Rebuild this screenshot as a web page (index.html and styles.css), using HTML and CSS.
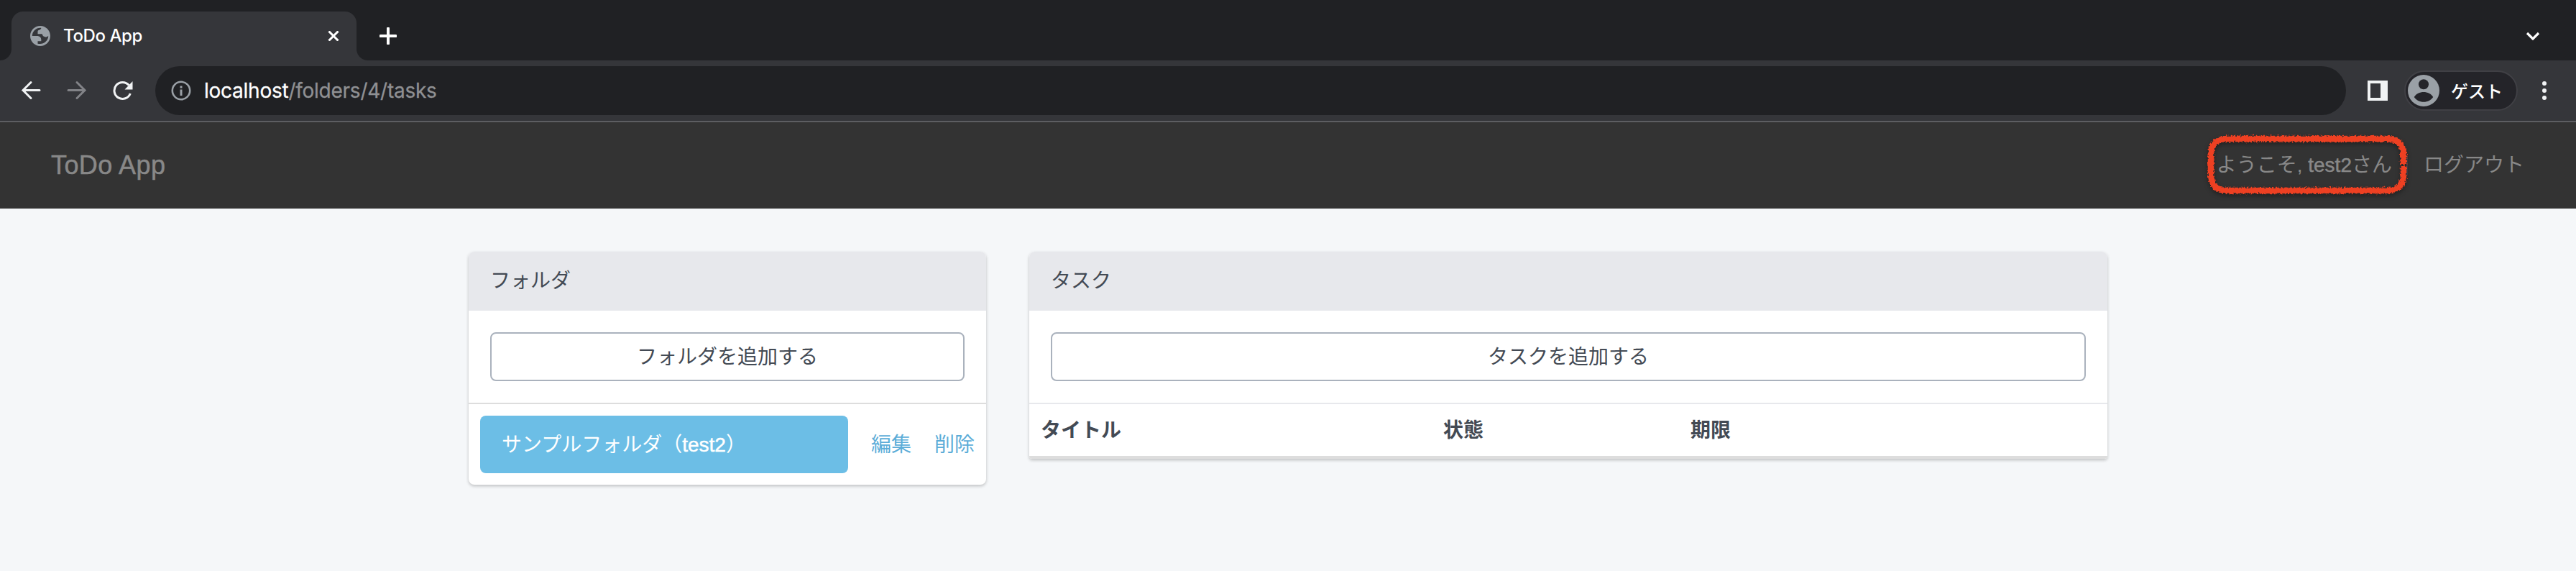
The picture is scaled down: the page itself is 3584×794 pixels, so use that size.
FILE: index.html
```html
<!DOCTYPE html>
<html lang="ja">
<head>
<meta charset="utf-8">
<title>ToDo App</title>
<link rel="stylesheet" href="styles.css">
</head>
<body>
<div class="tabstrip">
  <span class="foot foot-left"></span>
  <div class="tab">
    <svg class="favicon" viewBox="2 2 20 20"><path fill="#9aa0a6" fill-rule="evenodd" d="M12 2C6.480 2 2 6.480 2 12s4.480 10 10 10 10-4.480 10-10S17.520 2 12 2zM4 12h4.400c3.407.020 4.922 1.730 4.540 5.130H9.490v2.470C14.700 21 20 17.200 20 12c-.830.670-1.500 1-2 1-2 0-4-1-4-3H9.500V7.500C9.500 5.500 12.500 6.500 13 4.060 8.200 3.500 4 7.200 4 12z"/></svg>
    <span class="tab-title">ToDo App</span>
    <svg class="tab-close" viewBox="0 0 16 14"><path d="M1.500 .500l13 13M14.500 .500l-13 13" stroke="#fff" stroke-width="3"/></svg>
  </div>
  <span class="foot foot-right"></span>
  <svg class="new-tab" viewBox="0 0 24 24"><path d="M12 1.500v21M1.500 12h21" stroke="#fff" stroke-width="4" stroke-linecap="round"/></svg>
  <svg class="tab-search" viewBox="0 0 20 12"><path d="M2 2l8 8 8-8" fill="none" stroke="#fff" stroke-width="3.200"/></svg>
</div>
<div class="toolbar">
  <svg class="nav-icon" viewBox="0 0 28 28"><path d="M26 13.500H3M14 2.500L3 13.500l11 11" fill="none" stroke="#f1f3f4" stroke-width="3" stroke-linecap="round"/></svg>
  <svg class="nav-icon" viewBox="0 0 28 28"><path d="M2 13.500h23M14 2.500l11 11-11 11" fill="none" stroke="#828387" stroke-width="3" stroke-linecap="round"/></svg>
  <svg class="nav-icon" viewBox="0 0 28 28"><path d="M24.300 18A11.500 11.500 0 1 1 22.300 6.500" fill="none" stroke="#f1f3f4" stroke-width="3"/><path d="M27.500 1v11.500H16.500z" fill="#f1f3f4"/></svg>
  <div class="omnibox">
    <svg class="info" viewBox="0 0 28 28"><circle cx="14" cy="14" r="12.200" fill="none" stroke="#9aa0a6" stroke-width="2.600"/><path d="M12.500 7.500h3v3h-3zM12.500 12.500h3v8.500h-3z" fill="#9aa0a6"/></svg>
    <span class="url"><span class="host">localhost</span>/folders/4/tasks</span>
  </div>
  <svg class="side-panel" viewBox="0 0 28 28"><path fill="#f1f3f4" fill-rule="evenodd" d="M0 0h28v28H0zM4 4v20h14V4z"/></svg>
  <div class="profile">
    <svg class="avatar" viewBox="0 0 44 44"><circle cx="22" cy="22" r="22" fill="#9aa0a6"/><circle cx="22" cy="13.300" r="7" fill="#242429"/><path d="M8.800 31C11 26.500 17 24 22 24s11 2.500 13.200 7C32.500 35 27.500 37.800 22 37.800S11.500 35 8.800 31z" fill="#242429"/></svg>
    <span>ゲスト</span>
  </div>
  <svg class="menu" viewBox="0 0 6 28"><circle cx="3" cy="4" r="3" fill="#f1f3f4"/><circle cx="3" cy="14" r="3" fill="#f1f3f4"/><circle cx="3" cy="24" r="3" fill="#f1f3f4"/></svg>
</div>
<nav class="navbar">
  <a class="brand">ToDo App</a>
  <div class="account">
    <span class="welcome">ようこそ, <span class="latin">test2</span>さん
      <svg class="marker" viewBox="0 0 292 96">
        <defs><filter id="rough" x="-5%" y="-10%" width="110%" height="120%"><feTurbulence type="fractalNoise" baseFrequency="0.4" numOctaves="2" seed="4" result="n"/><feDisplacementMap in="SourceGraphic" in2="n" scale="6" xChannelSelector="R" yChannelSelector="G"/></filter></defs>
        <path d="M280 50V61Q280 84 257 84H35Q12 84 12 61V35Q12 12 35 12H257Q280 12 280 35V48" fill="none" stroke="#ee4023" stroke-width="8.500" filter="url(#rough)"/>
      </svg>
    </span>
    <span class="separator"></span>
    <a class="logout">ログアウト</a>
  </div>
</nav>
<main class="container">
  <section class="panel folders">
    <h2 class="panel-heading">フォルダ</h2>
    <div class="panel-body"><a class="btn">フォルダを追加する</a></div>
    <div class="folder-row">
      <a class="folder">サンプルフォルダ（<span class="latin">test2</span>）</a>
      <a class="link">編集</a>
      <a class="link">削除</a>
    </div>
  </section>
  <section class="panel tasks">
    <h2 class="panel-heading">タスク</h2>
    <div class="panel-body"><a class="btn">タスクを追加する</a></div>
    <div class="task-head"><span>タイトル</span><span>状態</span><span>期限</span></div>
  </section>
</main>
</body>
</html>
```
FILE: styles.css
```css
* { box-sizing: border-box; }
body {
  margin: 0;
  height: 794px;
  overflow: hidden;
  background: #f5f7f9;
  color: #434a54;
  font: 28px/40px "Liberation Sans", "Noto Sans CJK JP", sans-serif;
}
svg { display: block; flex: none; }

.tabstrip { display: flex; height: 84px; background: #202124; align-items: flex-end; }
.foot { width: 16px; height: 16px; }
.foot-left { background: radial-gradient(circle at 0 0, #202124 15.5px, #35363a 16.5px); }
.foot-right { background: radial-gradient(circle at 100% 0, #202124 15.5px, #35363a 16.5px); }
.tab {
  display: flex;
  align-items: center;
  width: 480px;
  height: 68px;
  padding: 0 24px 0 26px;
  border-radius: 16px 16px 0 0;
  background: #35363a;
}
.favicon { width: 28px; height: 28px; }
.tab-title {
  margin-left: 18px;
  color: #fff;
  font: 500 24px/32px Inter, sans-serif;
  letter-spacing: -0.4px;
}
.tab-close { width: 16px; height: 14px; margin-left: auto; }
.new-tab { width: 24px; height: 24px; margin: 0 0 22px 16px; }
.tab-search { width: 20px; height: 12px; margin: 0 50px 28px auto; }

.toolbar {
  display: flex;
  align-items: center;
  height: 86px;
  padding: 0 41px 0 29px;
  background: #35363a;
  border-bottom: 2px solid #5d5e62;
}
.nav-icon { width: 28px; height: 28px; margin-right: 36px; }
.omnibox {
  display: flex;
  align-items: center;
  flex: 1;
  height: 68px;
  margin-left: -5px;
  padding-left: 22px;
  border-radius: 34px;
  background: #202124;
}
.info { width: 28px; height: 28px; }
.url {
  margin-left: 18px;
  color: #8f9093;
  font: 28px/40px Inter, sans-serif;
  letter-spacing: -0.25px;
  -webkit-text-stroke: 0.3px currentColor;
}
.host { color: #fff; }
.side-panel { width: 28px; height: 28px; margin-left: 30px; }
.profile {
  display: flex;
  align-items: center;
  width: 158px;
  height: 56px;
  margin-left: 23px;
  padding-left: 3px;
  border: 2px solid #404045;
  border-radius: 28px;
  background: #242429;
  color: #fff;
  font: 500 24px/34px "Noto Sans CJK JP", sans-serif;
}
.avatar { width: 44px; height: 44px; margin-right: 16px; }
.menu { width: 6px; height: 28px; margin-left: 34px; }

.navbar {
  display: flex;
  align-items: center;
  justify-content: space-between;
  height: 120px;
  padding: 0 72px;
  background: #333;
  color: #888;
}
.brand {
  margin-left: -1px;
  font-size: 36px;
  letter-spacing: 0.4px;
  -webkit-text-stroke: 0.5px currentColor;
}
.latin { -webkit-text-stroke: 0.5px currentColor; }
.account { display: flex; align-items: center; }
.welcome { position: relative; }
.marker {
  position: absolute;
  left: -20px;
  top: -29px;
  width: 292px;
  height: 96px;
  filter: drop-shadow(0 3px 3px rgba(0, 0, 0, .35));
}
.separator { width: 2px; height: 26px; margin: 0 22px 0 20px; background: #3b454d; }

.container { display: flex; align-items: flex-start; gap: 60px; width: 2280px; margin: 60px 0 0 652px; }
.panel {
  overflow: hidden;
  border-radius: 8px;
  background: #fff;
  box-shadow: 0 2px 4px rgba(0, 0, 0, .22);
}
.folders { width: 720px; }
.tasks { width: 1500px; border-radius: 8px 8px 4px 4px; }
.panel-heading {
  height: 82px;
  margin: 0;
  padding: 21px 30px 0;
  background: #e7e8ec;
  font-size: 28px;
  font-weight: 400;
}
.panel-body { padding: 30px; }
.btn {
  display: block;
  height: 68px;
  padding: 13px 0 0;
  border: 2px solid #aab2bd;
  border-radius: 8px;
  text-align: center;
}
.folder-row {
  display: flex;
  align-items: center;
  height: 114px;
  padding: 0 16px;
  border-top: 2px solid #ddd;
}
.folder {
  width: 512px;
  height: 80px;
  padding: 21px 30px 0;
  border-radius: 8px;
  background: #6cbee6;
  color: #fff;
}
.link { margin-left: 32px; padding-top: 2px; color: #5cadd8; }
.task-head {
  display: grid;
  grid-template-columns: 560px 344px 1fr;
  height: 78px;
  padding: 17px 16px 0;
  border-top: 2px solid #e7e8ec;
  border-bottom: 4px solid #ddd;
  font-weight: 700;
}
```
